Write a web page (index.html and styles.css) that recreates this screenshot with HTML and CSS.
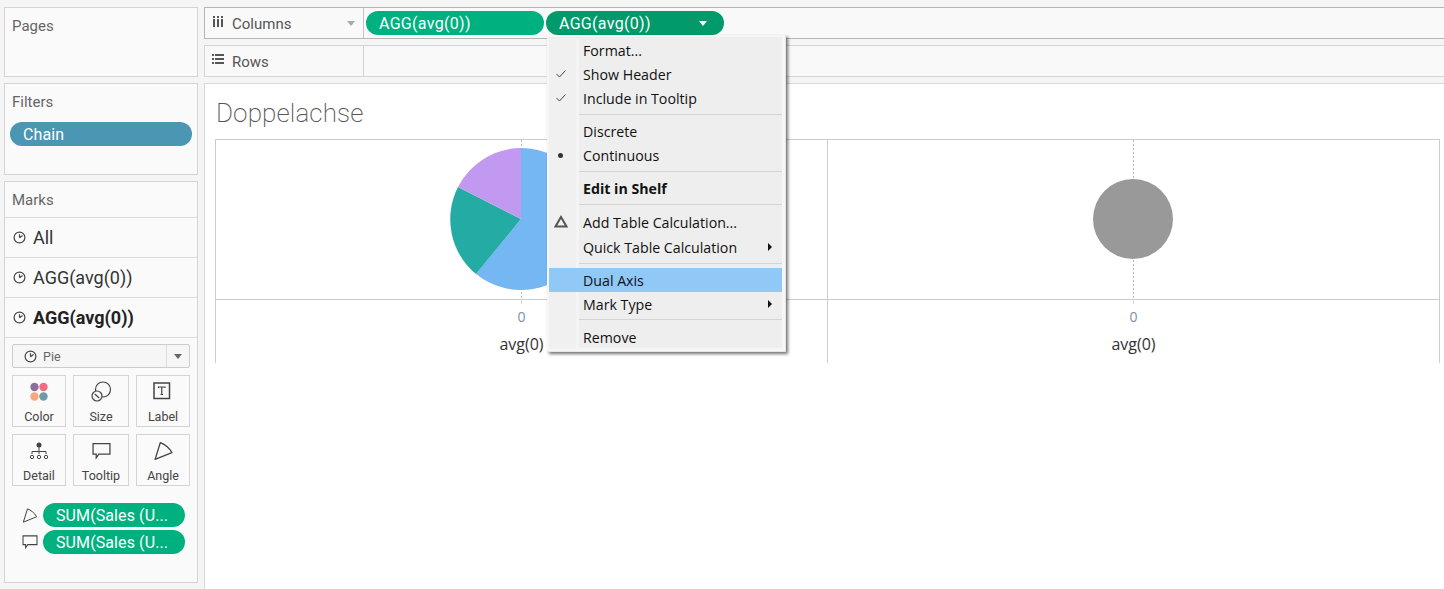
FILE: index.html
```html
<!DOCTYPE html>
<html lang="en">
<head>
<meta charset="utf-8">
<title>Doppelachse</title>
<link rel="stylesheet" href="styles.css">
</head>
<body>
<svg class="defs" width="0" height="0" aria-hidden="true">
  <symbol id="pie" viewBox="0 0 13 13"><circle cx="6.5" cy="6.5" r="5.4" fill="none" stroke="currentColor" stroke-width="1.2"/><path d="M6.5 6.8V3.2M6.5 6.8L9.6 4.6" fill="none" stroke="currentColor" stroke-width="1.2"/></symbol>
  <symbol id="angle" viewBox="0 0 18 18"><path d="M1 17L6 1C10 2.500 14.500 6 17 10.500Z" fill="none" stroke="currentColor" stroke-width="1.2" stroke-linejoin="round"/></symbol>
  <symbol id="tip" viewBox="0 0 18 16"><path d="M1 1H17V11H6.500L4 14.500V11H1Z" fill="none" stroke="currentColor" stroke-width="1.2"/></symbol>
</svg>
<div class="app">
  <aside class="side">
    <section class="panel pages"><h2 class="panel-title">Pages</h2></section>
    <section class="panel filters">
      <h2 class="panel-title">Filters</h2>
      <div class="pill filter-pill">Chain</div>
    </section>
    <section class="panel marks">
      <h2 class="marks-head">Marks</h2>
      <div class="mark-row"><svg class="ic-pie"><use href="#pie"/></svg>All</div>
      <div class="mark-row"><svg class="ic-pie"><use href="#pie"/></svg>AGG(avg(0))</div>
      <div class="mark-row active"><svg class="ic-pie"><use href="#pie"/></svg>AGG(avg(0))</div>
      <div class="mark-body">
        <div class="select">
          <div class="select-val"><svg class="ic-pie"><use href="#pie"/></svg>Pie</div>
          <div class="select-arrow"><span class="tri tri-dark"></span></div>
        </div>
        <div class="cards">
          <div class="card">
            <svg class="card-ic" width="22" height="22" viewBox="0 0 22 22"><circle cx="6.500" cy="6" r="4.200" fill="#8e6f9c"/><circle cx="15.500" cy="6" r="4.200" fill="#f26b80"/><circle cx="6.500" cy="15.500" r="4.200" fill="#f5a97f"/><circle cx="15.500" cy="15.500" r="4.200" fill="#6f9ba8"/></svg>
            <span>Color</span>
          </div>
          <div class="card">
            <svg class="card-ic" width="22" height="22" viewBox="0 0 22 22" fill="none" stroke="#444" stroke-width="1.2"><circle cx="13" cy="8.500" r="7.500"/><circle cx="7" cy="15" r="5" fill="#fafafa"/><path d="M4.800 13l4.400 4"/></svg>
            <span>Size</span>
          </div>
          <div class="card">
            <svg class="card-ic" width="22" height="22" viewBox="0 0 22 22" fill="none" stroke="#444"><rect x="2" y="2" width="15.500" height="15.500" stroke-width="1.500"/><path d="M6.500 7V6H13V7M9.750 6V13.500M8.500 13.500H11" stroke-width="1.200"/></svg>
            <span>Label</span>
          </div>
          <div class="card">
            <svg class="card-ic" width="22" height="22" viewBox="0 0 22 22" fill="#444"><circle cx="11" cy="5" r="2.500"/><path d="M11 7v7M4 14v-2.500h14V14" fill="none" stroke="#444"/><circle cx="4" cy="17" r="1.700" fill="none" stroke="#444"/><circle cx="11" cy="17" r="1.700" fill="none" stroke="#444"/><circle cx="18" cy="17" r="1.700" fill="none" stroke="#444"/></svg>
            <span>Detail</span>
          </div>
          <div class="card">
            <svg class="card-ic tip-ic" width="19" height="17"><use href="#tip"/></svg>
            <span>Tooltip</span>
          </div>
          <div class="card">
            <svg class="card-ic angle-ic" width="19" height="19"><use href="#angle"/></svg>
            <span>Angle</span>
          </div>
        </div>
        <div class="encodings">
          <div class="enc"><svg class="enc-ic" width="15" height="15"><use href="#angle"/></svg><div class="pill enc-pill">SUM(Sales (U...</div></div>
          <div class="enc"><svg class="enc-ic" width="15" height="14"><use href="#tip"/></svg><div class="pill enc-pill">SUM(Sales (U...</div></div>
        </div>
      </div>
    </section>
  </aside>
  <main class="main">
    <div class="shelf columns">
      <div class="shelf-label">
        <span class="shelf-name"><svg class="shelf-ic" width="12" height="12" viewBox="0 0 12 12" fill="#555"><rect x="1" y="1" width="2" height="2"/><rect x="5" y="1" width="2" height="2"/><rect x="9" y="1" width="2" height="2"/><rect x="1" y="4" width="2" height="8"/><rect x="5" y="4" width="2" height="8"/><rect x="9" y="4" width="2" height="8"/></svg>Columns</span>
        <span class="tri tri-light"></span>
      </div>
      <div class="shelf-body">
        <div class="pill col-pill">AGG(avg(0))</div>
        <div class="pill col-pill open">AGG(avg(0))<span class="tri tri-white"></span></div>
      </div>
    </div>
    <div class="shelf rows">
      <div class="shelf-label">
        <span class="shelf-name"><svg class="shelf-ic" width="12" height="12" viewBox="0 0 12 12" fill="#555"><rect x="0" y="1" width="2" height="2"/><rect x="3" y="1" width="9" height="2"/><rect x="0" y="5" width="2" height="2"/><rect x="3" y="5" width="9" height="2"/><rect x="0" y="9" width="2" height="2"/><rect x="3" y="9" width="9" height="2"/></svg>Rows</span>
      </div>
      <div class="shelf-body"></div>
    </div>
    <div class="view">
      <h1 class="view-title">Doppelachse</h1>
      <div class="chart">
        <div class="pane">
          <svg class="plot" width="611" height="159" viewBox="0 0 611 159">
            <line x1="305.500" y1="0" x2="305.500" y2="159" stroke="#bbb" stroke-dasharray="2 2"/>
            <path d="M305 79V8A71 71 0 1 1 260 134Z" fill="#75b7f2"/>
            <path d="M305 79L260 134A71 71 0 0 1 242 47Z" fill="#24aba3"/>
            <path d="M305 79L242 47A71 71 0 0 1 305 8Z" fill="#c299f0"/>
          </svg>
        </div>
        <div class="pane">
          <svg class="plot" width="611" height="159" viewBox="0 0 611 159">
            <line x1="305.500" y1="0" x2="305.500" y2="159" stroke="#bbb" stroke-dasharray="2 2"/>
            <circle cx="305" cy="79" r="40" fill="#999"/>
          </svg>
        </div>
        <div class="axis"><span class="tick-mark"></span><span class="tick">0</span><span class="axis-name">avg(0)</span></div>
        <div class="axis"><span class="tick-mark"></span><span class="tick">0</span><span class="axis-name">avg(0)</span></div>
      </div>
    </div>
  </main>
</div>
<nav class="menu">
  <div class="menu-list">
    <div class="mi lift"><span class="mi-gut"></span><span class="mi-text">Format...</span></div>
    <div class="mi lift"><span class="mi-gut"><svg width="12" height="10" viewBox="0 0 12 10" fill="none" stroke="#444"><path d="M1.500 5l3 3 6-6.500"/></svg></span><span class="mi-text">Show Header</span></div>
    <div class="mi lift"><span class="mi-gut"><svg width="12" height="10" viewBox="0 0 12 10" fill="none" stroke="#444"><path d="M1.500 5l3 3 6-6.500"/></svg></span><span class="mi-text">Include in Tooltip</span></div>
    <div class="sep"><span class="sep-gut"></span><span class="sep-line"></span></div>
    <div class="mi lift"><span class="mi-gut"></span><span class="mi-text">Discrete</span></div>
    <div class="mi lift"><span class="mi-gut"><span class="dot"></span></span><span class="mi-text">Continuous</span></div>
    <div class="sep"><span class="sep-gut"></span><span class="sep-line"></span></div>
    <div class="mi lift"><span class="mi-gut"></span><span class="mi-text bold">Edit in Shelf</span></div>
    <div class="sep"><span class="sep-gut"></span><span class="sep-line"></span></div>
    <div class="mi tall"><span class="mi-gut"><svg class="delta" width="14" height="13" viewBox="0 0 14 13" fill="none" stroke="#555" stroke-width="2"><path d="M7 2L12.500 11.500H1.500Z"/></svg></span><span class="mi-text">Add Table Calculation...</span></div>
    <div class="mi tall"><span class="mi-gut"></span><span class="mi-text">Quick Table Calculation</span><span class="sub"></span></div>
    <div class="sep short"><span class="sep-gut"></span><span class="sep-line"></span></div>
    <div class="mi hot"><span class="mi-gut"></span><span class="mi-text">Dual Axis</span></div>
    <div class="mi"><span class="mi-gut"></span><span class="mi-text">Mark Type</span><span class="sub"></span></div>
    <div class="sep"><span class="sep-gut"></span><span class="sep-line"></span></div>
    <div class="mi"><span class="mi-gut"></span><span class="mi-text">Remove</span></div>
  </div>
</nav>
</body>
</html>
```
FILE: styles.css
```css
* { box-sizing: border-box; }
html, body { margin: 0; height: 100%; overflow: hidden; }
body { background: #f5f5f5; font-family: "Roboto", "Liberation Sans", sans-serif; color: #555; position: relative; }
.defs { position: absolute; }
.app { display: grid; grid-template-columns: 194px 1fr; column-gap: 6px; padding: 7px 0 0 4px; height: 589px; }
.side { display: flex; flex-direction: column; gap: 6px; }
.panel { background: #fafafa; border: 1px solid #d4d4d4; }
.pages { height: 70px; }
.filters { height: 92px; }
.marks { height: 402px; display: flex; flex-direction: column; }
.panel-title { margin: 0; font-weight: 400; font-size: 15px; line-height: 18px; padding: 9px 7px 0; color: #666; }
.filters .panel-title { margin-bottom: 11px; }
.pill { color: #fff; height: 24px; line-height: 25px; border-radius: 12px; font-size: 16px; letter-spacing: .1px; padding-left: 13px; white-space: nowrap; }
.filter-pill { background: #4a96b3; margin: 0 5px; }
.marks-head { margin: 0; height: 36px; font-weight: 400; font-size: 15px; line-height: 37px; padding-left: 7px; color: #666; border-bottom: 1px solid #dcdcdc; }
.mark-row { height: 40px; display: flex; align-items: center; border-bottom: 1px solid #dcdcdc; font-size: 18px; color: #333; padding-left: 8px; gap: 7px; }
.mark-row.active { font-weight: 700; color: #222; }
.mark-row .ic-pie { margin-top: -1px; }
.ic-pie { width: 13px; height: 13px; color: #444; flex: none; }
.mark-body { padding: 6px 7px 0; }
.select { display: flex; height: 24px; border: 1px solid #ccc; border-radius: 2px; background: #f6f6f6; }
.select-val { flex: 1; display: flex; align-items: center; gap: 6px; padding-left: 11px; font-size: 12.500px; color: #666; border-right: 1px solid #ddd; }
.select-arrow { width: 22px; display: flex; align-items: center; justify-content: center; }
.tri { display: block; width: 0; height: 0; border-left: 4.500px solid transparent; border-right: 4.500px solid transparent; border-top: 5px solid #666; }
.tri-light { border-top-color: #aaa; border-left-width: 4px; border-right-width: 4px; }
.tri-white { border-top-color: #fff; }
.tri-dark { border-left-width: 4px; border-right-width: 4px; }
.cards { margin-top: 7px; display: grid; grid-template-columns: 54px 56px 54px; grid-auto-rows: 52px; column-gap: 7px; row-gap: 7px; }
.card { border: 1px solid #d4d4d4; display: flex; flex-direction: column; align-items: center; font-size: 12.500px; color: #444; position: relative; }
.card-ic { height: 22px; margin-top: 5px; flex: none; }
.card span { position: absolute; top: 33px; line-height: 15px; }
.tip-ic, .angle-ic { color: #444; }
.encodings { margin-top: 17px; display: flex; flex-direction: column; gap: 3px; }
.enc { display: flex; align-items: center; padding-left: 10px; }
.enc-ic { color: #444; margin-right: 5px; flex: none; width: 16px; }
.enc-pill { background: #00b180; width: 142px; }
.main { display: flex; flex-direction: column; gap: 6px; min-width: 0; }
.shelf { height: 32px; display: flex; background: #f9f9f9; }
.columns { border: 1px solid #b5b5b5; border-right: 0; }
.rows { border: 1px solid #d4d4d4; border-right: 0; }
.shelf-label { width: 159px; flex: none; display: flex; align-items: center; justify-content: space-between; padding: 1px 8px 0 7px; border-right: 1px solid #c4c4c4; font-size: 15px; color: #555; }
.rows .shelf-label { border-right-color: #d4d4d4; }
.shelf-name { display: flex; align-items: center; gap: 8px; }
.shelf-ic { flex: none; margin-top: -5px; }
.shelf-body { flex: 1; display: flex; gap: 2px; padding: 3px 0 0 2px; }
.col-pill { width: 178px; background: #00b180; display: flex; align-items: center; justify-content: space-between; padding-right: 17px; letter-spacing: .3px; }
.col-pill.open { background: #009a6b; }
.view { flex: 1; background: #fff; border-left: 1px solid #d8d8d8; border-top: 1px solid #d8d8d8; padding: 0 0 0 10px; }
.view-title { margin: 0; font-weight: 200; font-size: 26px; letter-spacing: .1px; line-height: 30px; padding: 14px 0 0 1px; height: 55px; color: #555; }
.chart { display: grid; grid-template-columns: 612px 613px; grid-template-rows: 160px 63px; width: 1225px; border-top: 1px solid #ccc; }
.pane { border-left: 1px solid #ccc; border-bottom: 1px solid #ccc; }
.pane:nth-child(2) { border-right: 1px solid #ccc; }
.plot { display: block; }
.axis { border-left: 1px solid #ccc; display: flex; flex-direction: column; align-items: center; color: #333; position: relative; font-family: "Open Sans", "Liberation Sans", sans-serif; }
.axis:nth-child(4) { border-right: 1px solid #ccc; }
.tick-mark { width: 1px; height: 4px; background: #ddd; flex: none; }
.tick { font-size: 14px; line-height: 16px; margin-top: 5px; color: #7a90a8; }
.axis-name { font-size: 16px; line-height: 18px; margin-top: 10px; }
.menu { position: absolute; left: 547px; top: 35px; width: 239px; height: 317px; background: #f6f6f6; padding: 2px 3px 3px 2px; box-shadow: 2px 2px 3px rgba(0,0,0,.55); border: 1px solid #e6e6e6; border-width: 0 1px 1px 0; font-family: "Open Sans", "Liberation Sans", sans-serif; font-size: 14.200px; color: #111; }
.menu-list { background: #eee; height: 100%; padding-top: 2px; display: flex; flex-direction: column; position: relative; }
.mi { height: 24px; display: flex; align-items: center; flex: none; position: relative; }
.mi.tall { height: 25px; }
.mi.lift .mi-text { padding-bottom: 2px; }
.mi.lift .mi-gut { padding-bottom: 2px; }
.mi-gut { width: 27px; height: 100%; background: #f0f0f0; margin-right: 7px; display: flex; align-items: center; justify-content: center; flex: none; box-shadow: 3px 0 0 #f4f4f4; padding-right: 4px; }
.mi-text { white-space: nowrap; }
.bold { font-weight: 700; }
.hot { background: #90c8f6; }
.hot .mi-gut { background: #90c8f6; box-shadow: none; }
.dot { width: 5px; height: 5px; border-radius: 50%; background: #333; }
.delta { margin-top: -2px; }
.sub { position: absolute; right: 10px; top: 8px; width: 0; height: 0; border-top: 4px solid transparent; border-bottom: 4px solid transparent; border-left: 4px solid #111; }
.sep { height: 9px; display: flex; flex: none; }
.sep.short { height: 8px; }
.sep-gut { width: 27px; background: #f0f0f0; box-shadow: 3px 0 0 #f4f4f4; flex: none; }
.sep-line { flex: 1; margin: 3px 0 0 3px; height: 1px; background: #d4d4d4; }
```
